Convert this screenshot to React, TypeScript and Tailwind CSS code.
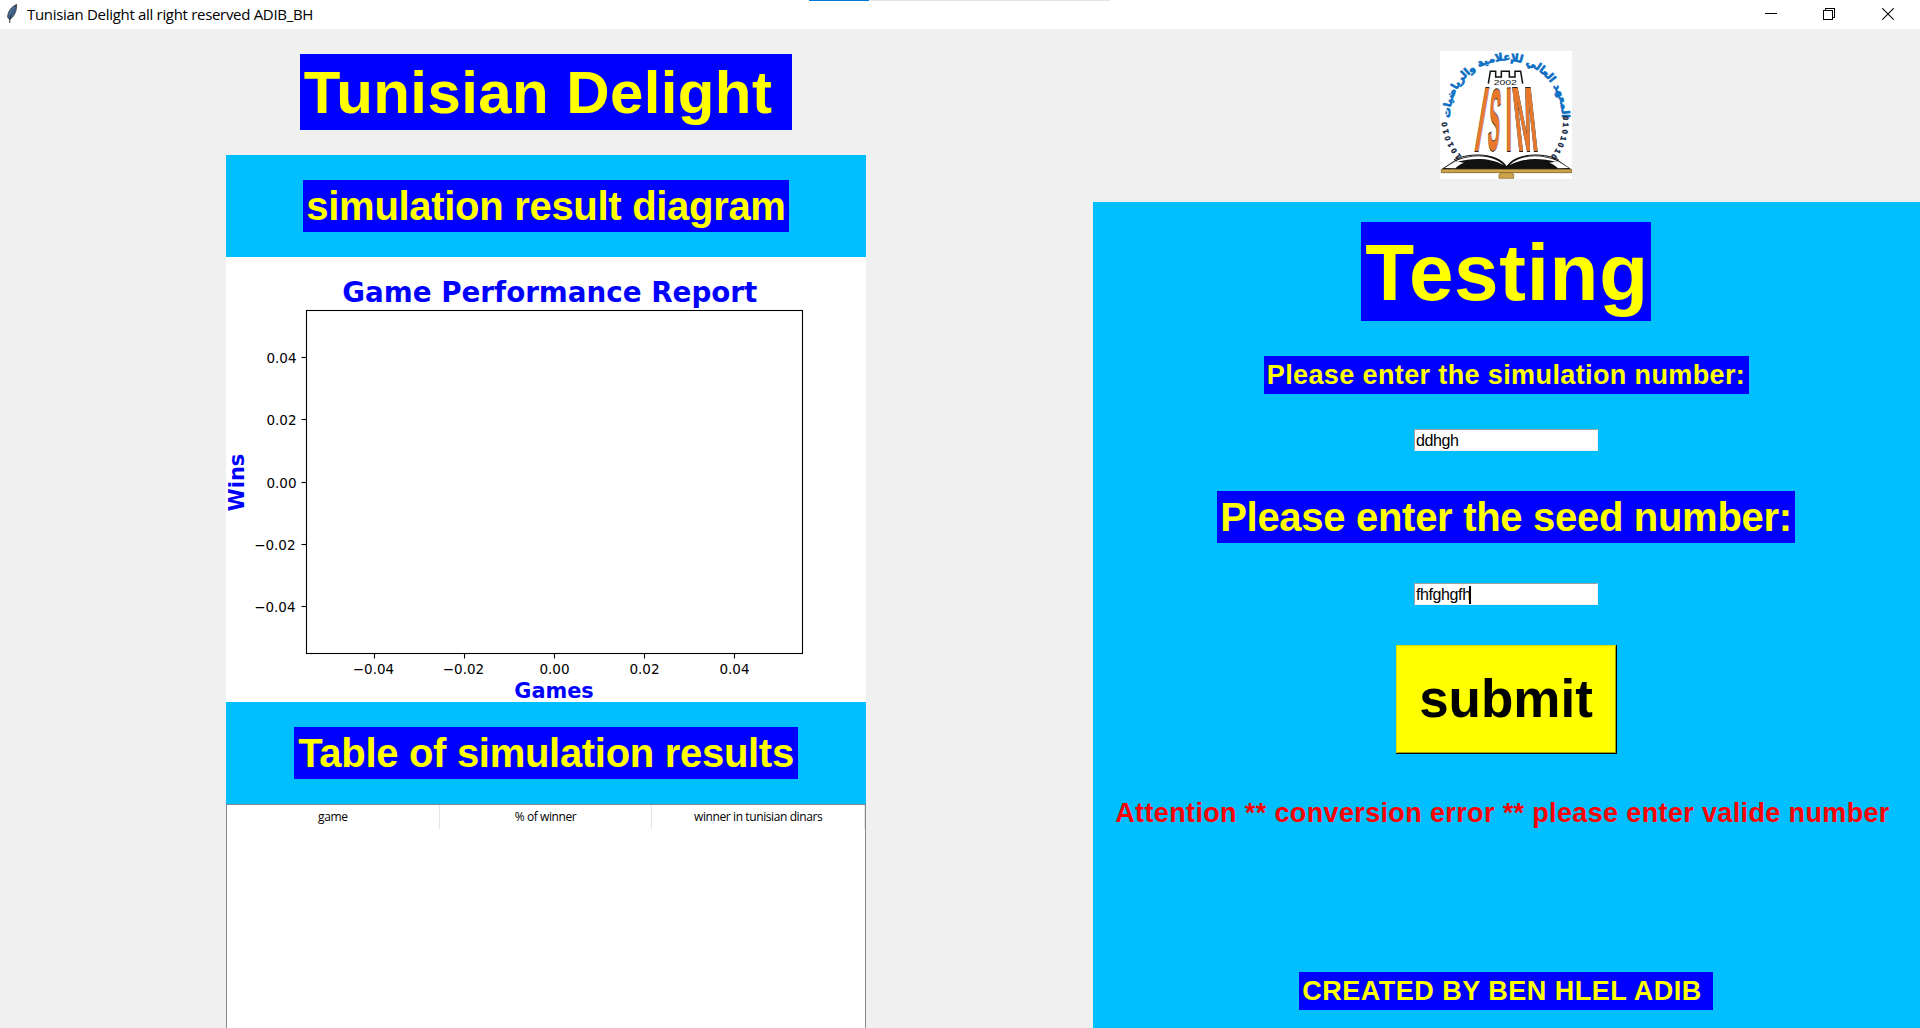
import type { ReactNode } from "react";

const Y_TICKS = [
  { y: 100.5, x: 70.5, label: "0.04" },
  { y: 162.5, x: 70.5, label: "0.02" },
  { y: 225.5, x: 70.5, label: "0.00" },
  { y: 287.5, x: 69.5, label: "−0.02" },
  { y: 349.5, x: 69.5, label: "−0.04" },
];

const X_TICKS = [
  { x: 148.5, textX: 147.5, label: "−0.04" },
  { x: 238.5, textX: 237.5, label: "−0.02" },
  { x: 328.5, textX: 328.5, label: "0.00" },
  { x: 418.5, textX: 418.5, label: "0.02" },
  { x: 508.5, textX: 508.5, label: "0.04" },
];

function Label({ className, children }: { className: string; children: ReactNode }) {
  return (
    <div
      className={`flex shrink-0 items-center justify-center whitespace-pre bg-[#0000ff] font-bold leading-none text-[#ffff00] ${className}`}
    >
      {children}
    </div>
  );
}

function TitleBar() {
  return (
    <header className="relative flex h-[29px] shrink-0 items-center bg-white">
      <svg className="-mt-px ml-1.5 h-5 w-3" viewBox="0 0 12 20">
        <path d="M10.6 0.5C6 2.500 2 6.500 1.600 13L3.300 15.500C8 13.500 10.800 7 10.600 0.500Z" fill="#3d6493" stroke="#3b3f48" strokeWidth="0.9" />
        <path d="M9.500 2C6 6 4.300 11 3.600 18.800" fill="none" stroke="#23282f" strokeWidth="1" />
        <path d="M8.700 3C6.500 5.500 5 8 4.200 11" fill="none" stroke="#8fb0d4" strokeWidth="0.6" />
      </svg>
      <span className="-mt-px ml-[9px] whitespace-pre font-['Open_Sans'] text-[15px] leading-5 tracking-[-0.31px] text-black">
        Tunisian Delight all right reserved ADIB_BH
      </span>
      <div className="absolute left-[809px] top-0 flex h-px w-[301px] bg-[#e5e5e5]">
        <div className="h-px w-[60px] bg-[#0078d7]" />
      </div>
      <div className="ml-auto mr-[26px] flex items-center gap-[46px]">
        <svg className="h-[13px] w-3" viewBox="0 0 12 13" shapeRendering="crispEdges">
          <path d="M0 5.500H12" stroke="#000" />
        </svg>
        <svg className="h-[13px] w-[13px]" viewBox="0 0 13 13" fill="none" stroke="#000" shapeRendering="crispEdges">
          <path d="M0.500 2.500H9.500V11.500H0.500ZM2.500 2.500V0.500H11.500V9.500H9.500" />
        </svg>
        <svg className="h-[13px] w-3" viewBox="0 0 12 13" stroke="#000" strokeWidth="1.100">
          <path d="M0.300 0.300L11.700 11.700M11.700 0.300L0.300 11.700" />
        </svg>
      </div>
    </header>
  );
}

function Chart() {
  return (
    <svg
      className="block h-[445px] w-[640px] shrink-0 bg-white font-['DejaVu_Sans']"
      viewBox="0 0 640 445"
    >
      <text x="323.800" y="45" textAnchor="middle" fontSize="27.780" fontWeight="bold" fill="#0000ff" textLength="415">
        Game Performance Report
      </text>
      <rect x="80.500" y="53.500" width="496" height="343" fill="none" stroke="#000" strokeWidth="1.100" />
      {Y_TICKS.map((t) => (
        <g key={t.label}>
          <path d={`M75.500 ${t.y}H80.500`} stroke="#000" strokeWidth="1.100" />
          <text x={t.x} y={t.y + 5} textAnchor="end" fontSize="13.500">{t.label}</text>
        </g>
      ))}
      {X_TICKS.map((t) => (
        <g key={t.label}>
          <path d={`M${t.x} 396.500V401.500`} stroke="#000" strokeWidth="1.100" />
          <text x={t.textX} y="417" textAnchor="middle" fontSize="13.500">{t.label}</text>
        </g>
      ))}
      <text x="328" y="440.500" textAnchor="middle" fontSize="20.830" fontWeight="bold" fill="#0000ff">
        Games
      </text>
      <text transform="translate(17.500 225.500) rotate(-90)" textAnchor="middle" fontSize="20.830" fontWeight="bold" fill="#0000ff">
        Wins
      </text>
    </svg>
  );
}

function Logo() {
  return (
    <svg className="h-32 w-[132px] shrink-0 bg-white" viewBox="30 33 396 384">
      <defs>
        <path id="arabic-arc" d="M60 230A168 168 0 1 1 396 230" />
        <path id="bits-left" d="M109 364A180 180 0 0 1 50 218" />
        <path id="bits-right" d="M399 228A174 174 0 0 1 346 368" />
      </defs>
      <text fill="#0b6fc4" stroke="#0b6fc4" strokeWidth="2" fontSize="31.500" fontWeight="bold" fontFamily="'DejaVu Sans', sans-serif" textAnchor="middle">
        <textPath href="#arabic-arc" startOffset="50%">المعهد العالي للإعلامية والرياضيات</textPath>
      </text>
      <g fill="#0c2340" fontSize="23" fontWeight="bold" fontFamily="'Liberation Sans', sans-serif" stroke="#0c2340" strokeWidth="1.200">
        <text letterSpacing="7.500"><textPath href="#bits-left">0101010</textPath></text>
        <text letterSpacing="7"><textPath href="#bits-right">0101010</textPath></text>
      </g>
      <path d="M175 131L181 94H197V111H214V94H238V111H255V94H272L278 131" fill="none" stroke="#111" strokeWidth="4.500" />
      <text transform="translate(191 136) scale(1.650 1)" fontSize="19" fontFamily="'Liberation Sans', sans-serif" fill="#111">2002</text>
      <g fill="#e8772a" stroke="#222" strokeWidth="1.400" fontSize="275" fontFamily="'Liberation Sans', sans-serif" fontWeight="bold" paintOrder="stroke">
        <text transform="matrix(0.260 0 -0.170 1 130 332)" vectorEffect="non-scaling-stroke">I</text>
        <text transform="matrix(0.190 0 -0.060 0.950 171 329)" vectorEffect="non-scaling-stroke">S</text>
        <text transform="matrix(0.240 0 0 1 227 332)" vectorEffect="non-scaling-stroke">I</text>
        <text transform="matrix(0.280 0 0.110 1 263 332)" vectorEffect="non-scaling-stroke">M</text>
      </g>
      <path d="M34 388L76 360C118 344 202 334 230 380C258 334 342 344 384 360L424 388Z" fill="#111" />
      <path d="M80 362C126 342 188 342 222 376C178 352 128 354 80 366Z" fill="#fff" />
      <path d="M380 362C334 342 272 342 238 376C282 352 332 354 380 366Z" fill="#fff" />
      <path d="M72 359C124 336 204 340 230 380C256 340 336 336 386 359" fill="none" stroke="#111" strokeWidth="3" />
      <path d="M44 384L76 364L102 368C90 372 80 380 76 385ZM416 384L384 364L358 368C370 372 380 380 384 385Z" fill="#fff" />
      <path d="M34 388H425V398H34Z" fill="#cda349" stroke="#6a4a14" strokeWidth="2" />
      <path d="M211 398H248V403H251V415H207V403H211Z" fill="#cda349" stroke="#8a6420" strokeWidth="2" />
    </svg>
  );
}

function Entry({ value, caret = false }: { value: string; caret?: boolean }) {
  return (
    <div className="flex h-[22px] w-[184px] shrink-0 items-center border border-b-[#f0f0f0] border-l-[#a0a0a0] border-r-[#f0f0f0] border-t-[#a0a0a0] bg-white pl-px pt-0.5 text-base leading-none tracking-[-0.4px] text-black">
      <span>{value}</span>
      {caret && <span className="-ml-0.5 -mt-px h-[18px] w-[2px] bg-black" />}
    </div>
  );
}

export default function App() {
  return (
    <div className="flex h-[1028px] w-[1920px] flex-col overflow-hidden bg-[#f0f0f0] font-['Liberation_Sans',sans-serif]">
      <TitleBar />
      <main className="flex min-h-0 flex-1 justify-between pl-[226px]">
        <section className="flex w-[640px] flex-col items-center pt-[25px]">
          <Label className="mb-[25px] h-[76px] w-[492px] pl-px pt-px text-[60px] tracking-[0.4px]">{"Tunisian Delight "}</Label>
          <div className="flex h-[102px] w-full shrink-0 items-center justify-center bg-[#00bfff]">
            <Label className="h-[52px] w-[486px] text-[40px] tracking-[-0.3px]">simulation result diagram</Label>
          </div>
          <Chart />
          <div className="flex h-[102px] w-full shrink-0 items-center justify-center bg-[#00bfff]">
            <Label className="h-[52px] w-[504px] text-[40px] tracking-[-0.3px]">Table of simulation results</Label>
          </div>
          <div className="w-full flex-1 border border-b-0 border-[#828790] bg-white">
            <div className="grid h-6 grid-cols-3 text-center font-['Open_Sans'] text-xs leading-6 tracking-[-0.4px] text-black">
              <div className="border-r border-[#e5e5e5]">game</div>
              <div className="border-r border-[#e5e5e5]">% of winner</div>
              <div className="border-r border-[#e5e5e5]">winner in tunisian dinars</div>
            </div>
          </div>
        </section>

        <section className="flex w-[827px] flex-col items-center pt-[22px]">
          <div className="flex pr-px">
            <Logo />
          </div>
          <div className="mt-[23px] flex w-full flex-1 flex-col items-center bg-[#00bfff] pr-px pt-5">
            <Label className="h-[99px] w-[290px] pl-0.5 pt-0.5 text-[80px] tracking-[0.7px]">Testing</Label>
            <Label className="mt-[35px] h-[38px] w-[485px] text-[27px] tracking-[0.38px]">Please enter the simulation number:</Label>
            <div className="mt-[35px] flex">
              <Entry value="ddhgh" />
            </div>
            <Label className="mt-10 h-[52px] w-[578px] text-[40px] tracking-[-0.3px]">Please enter the seed number:</Label>
            <div className="mt-10 flex">
              <Entry value="fhfghgfh" caret />
            </div>
            <button className="mt-10 flex h-[109px] w-[221px] shrink-0 items-center justify-center border-b border-r border-black bg-[#ffff00] pb-px pl-px text-[53px] font-bold leading-none text-black shadow-[inset_1px_1px_0_#e0e000,inset_-1px_-1px_0_#a0a000]">
              submit
            </button>
            <p className="mt-[40px] flex h-[38px] shrink-0 items-center whitespace-pre pr-[7px] text-[27px] font-bold leading-none tracking-[0.36px] text-[#ff0000]">
              Attention ** conversion error ** please enter valide number
            </p>
            <Label className="mb-[18px] mt-auto h-[38px] w-[414px] text-[27px] tracking-[0.5px]">{"CREATED BY BEN HLEL ADIB "}</Label>
          </div>
        </section>
      </main>
    </div>
  );
}
